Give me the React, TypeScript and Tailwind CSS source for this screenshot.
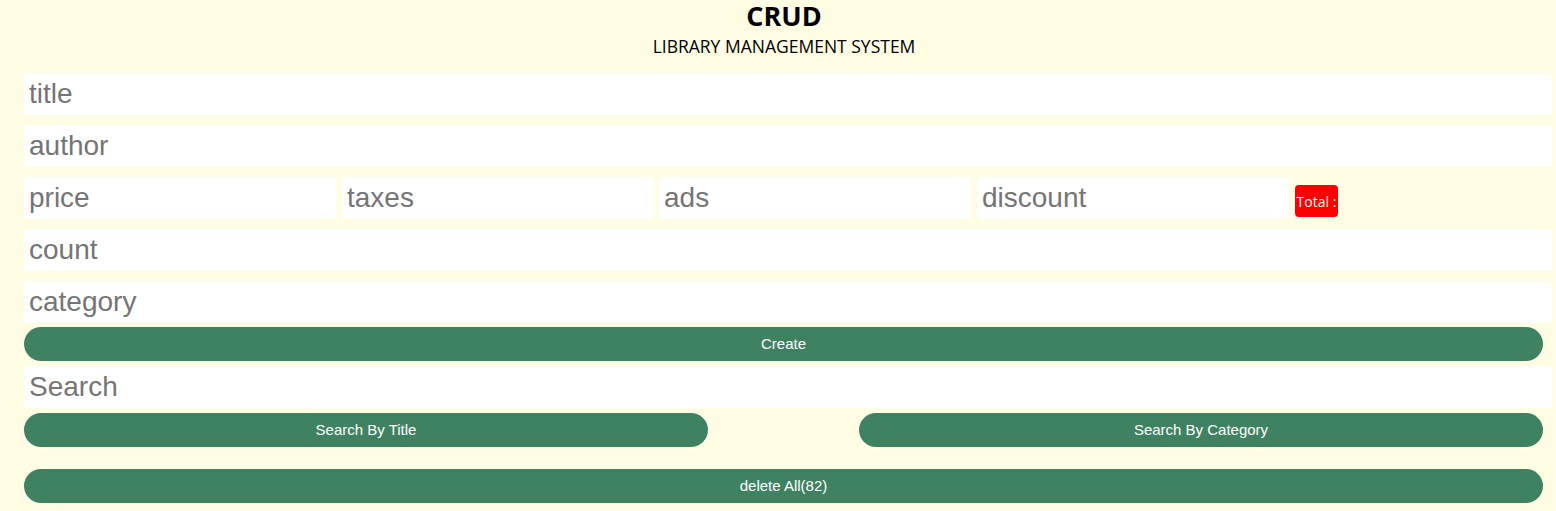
import React from "react";

const inputCls =
  "block w-[1528px] h-[42px] bg-white rounded-[4px] outline-none px-[5px] text-[28px] text-[#333] placeholder:text-[#757575] font-['Liberation_Sans',Arial,sans-serif]";

const smallCls =
  "block w-[312px] h-[42px] bg-white rounded-[4px] outline-none px-[5px] text-[28px] text-[#333] placeholder:text-[#757575] font-['Liberation_Sans',Arial,sans-serif]";

const btnCls =
  "h-[34px] bg-[#3e8262] text-white rounded-[17px] text-[15px] font-['Liberation_Sans',Arial,sans-serif]";

export default function App() {
  return (
    <div className="min-h-[511px] bg-[#fffde4] pl-[24px]">
      <div className="pr-[12px] text-center font-['Open_Sans',sans-serif] text-black">
        <h2 className="text-[27px] font-bold leading-[32px]">CRUD</h2>
        <p className="text-[17.5px] leading-[28px]">LIBRARY MANAGEMENT SYSTEM</p>
      </div>

      <div className="mt-[13px] flex flex-col gap-[10px]">
        <input className={inputCls} placeholder="title" />
        <input className={inputCls} placeholder="author" />
        <div className="flex items-center">
          <input className={smallCls} placeholder="price" />
          <input className={`${smallCls} ml-[6px]`} placeholder="taxes" />
          <input className={`${smallCls} ml-[5px]`} placeholder="ads" />
          <input className={`${smallCls} ml-[6px]`} placeholder="discount" />
          <small className="ml-[6px] mt-[6px] h-[32px] w-[43px] flex items-center justify-center whitespace-nowrap bg-[#ff0000] text-white rounded-[4px] text-[14px] font-['Open_Sans',sans-serif]">
            Total :
          </small>
        </div>
        <input className={inputCls} placeholder="count" />
        <input className={inputCls} placeholder="category" />
      </div>

      <button className={`${btnCls} w-[1519px] mt-[4px] block`}>Create</button>

      <input className={`${inputCls} mt-[5px]`} placeholder="Search" />

      <div className="flex w-[1519px] justify-between mt-[5px]">
        <button className={`${btnCls} w-[684px]`}>Search By Title</button>
        <button className={`${btnCls} w-[684px]`}>Search By Category</button>
      </div>

      <button className={`${btnCls} w-[1519px] mt-[22px] block`}>delete All(82)</button>
    </div>
  );
}
